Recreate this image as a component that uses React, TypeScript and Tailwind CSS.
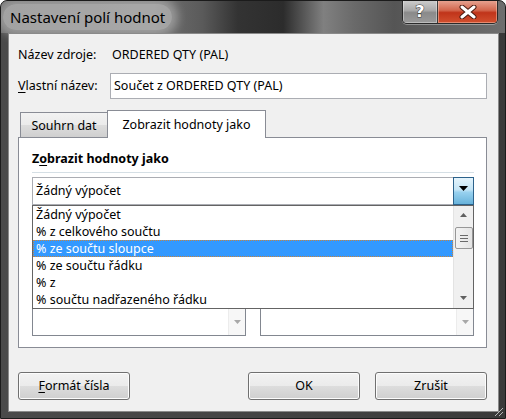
import React from "react";

const items = [
  "Žádný výpočet",
  "% z celkového součtu",
  "% ze součtu sloupce",
  "% ze součtu řádku",
  "% z",
  "% součtu nadřazeného řádku",
];

function Tri({ up = false, color = "#000", w = 7, h = 4 }: { up?: boolean; color?: string; w?: number; h?: number }) {
  return (
    <svg width={w} height={h} viewBox={`0 0 ${w} ${h}`} className="block">
      <polygon points={up ? `0,${h} ${w},${h} ${w / 2},0` : `0,0 ${w},0 ${w / 2},${h}`} fill={color} />
    </svg>
  );
}

const btn =
  "h-[28px] w-[112px] rounded-[3px] border border-[#707070] bg-[linear-gradient(#f2f2f2_0%,#ebebeb_50%,#dddddd_50%,#cfcfcf_100%)] shadow-[inset_0_0_0_1px_#fcfcfc] flex items-center justify-center text-black";

export default function App() {
  return (
    <div className="w-[506px] h-[419px] bg-white font-['Noto_Sans',sans-serif] text-[12.5px] leading-[16px] text-black">
      <div className="relative w-[506px] h-[419px] rounded-t-[7px] border border-[#1b1b1b] bg-[linear-gradient(90deg,#4a4a4a_0%,#444_50%,#3a3a3a_100%)] flex flex-col overflow-hidden">
        {/* Title bar */}
        <div className="h-[32px] flex items-start bg-[linear-gradient(90deg,#6a6a6a_0%,#727272_30%,#5a5a5a_40%,#333_47%,#2c2c2c_56%,#808080_64%,#6a6a6a_70%,#555_78%,#6e6e6e_100%)]">
          <div className="ml-[2px] mt-[3px] px-[7px] h-[26px] flex items-center rounded-[13px] bg-[rgba(255,255,255,0.38)] shadow-[0_0_10px_6px_rgba(255,255,255,0.32)]">
            <span className="text-[15px] leading-[20px] text-black">Nastavení polí hodnot</span>
          </div>
          <div className="ml-auto mr-[7px] -mt-px flex h-[24px] rounded-b-[5px] border border-t-0 border-[#2a2a2a] overflow-hidden shadow-[0_1px_0_rgba(255,255,255,0.35)]">
            <div className="w-[35px] h-full flex items-center justify-center bg-[linear-gradient(#cfcfcf_0%,#a9a9a9_45%,#8a8a8a_55%,#9a9a9a_100%)] border-r border-[#3a3a3a] shadow-[inset_0_0_0_1px_rgba(255,255,255,0.35)]">
              <span className="font-['DejaVu_Sans',sans-serif] font-bold text-[16px] leading-[16px] text-white [-webkit-text-stroke:1px_#3a3a3a] [paint-order:stroke_fill]">?</span>
            </div>
            <div className="w-[59px] h-full flex items-center justify-center bg-[linear-gradient(#e8a796_0%,#d2664d_45%,#c0341a_55%,#d2502f_100%)] shadow-[inset_0_0_0_1px_rgba(255,210,190,0.45)]">
              <svg width="18" height="14" viewBox="0 0 18 14">
                <path d="M3 2 L15 12 M15 2 L3 12" stroke="#4a1a10" strokeWidth="5" strokeLinecap="round" />
                <path d="M3 2 L15 12 M15 2 L3 12" stroke="#fff" strokeWidth="3" strokeLinecap="round" />
              </svg>
            </div>
          </div>
        </div>

        {/* Client area */}
        <div className="ml-[7px] w-[491px] h-[379px] border border-[#8a8a8a] bg-[#f0f0f0] flex flex-col pl-[9px] pt-[13px]">
          <div className="flex h-[16px] items-center">
            <div className="w-[94px]">Název zdroje:</div>
            <div>ORDERED QTY (PAL)</div>
          </div>
          <div className="mt-[10px] flex items-center h-[26px]">
            <div className="w-[92px]">
              <span className="underline underline-offset-2">V</span>lastní název:
            </div>
            <div className="w-[377px] h-[26px] border border-[#abadb3] bg-white flex items-center pl-[3px]">
              Součet z ORDERED QTY (PAL)
            </div>
          </div>

          {/* Tabs */}
          <div className="mt-[11px] flex items-end h-[27px] pl-[2px] relative z-10">
            <div className="w-[88px] h-[25px] border border-b-0 border-[#898c95] bg-[linear-gradient(#f2f2f2_0%,#ebebeb_50%,#dddddd_50%,#cfcfcf_100%)] flex items-center justify-center pt-[2px]">
              Souhrn dat
            </div>
            <div className="-ml-px w-[159px] h-[28px] -mb-px border border-b-0 border-[#898c95] bg-white flex items-center justify-center">
              Zobrazit hodnoty jako
            </div>
          </div>

          {/* Panel */}
          <div className="w-[469px] h-[211px] border border-[#898c95] bg-white flex flex-col pl-[13px] pt-[13px]">
            <div className="h-[16px] font-bold">
              Z<span className="underline underline-offset-2">o</span>brazit hodnoty jako
            </div>
            <div className="mt-[5px] w-[442px] h-px bg-[#d5dfe5]" />
            <div className="relative mt-[4px] w-[442px]">
              <div className="h-[28px] flex border border-[#abadb3] bg-white">
                <div className="flex-1 flex items-center pl-[3px]">Žádný výpočet</div>
                <div className="-my-px -mr-px w-[21px] border border-[#2c628b] bg-[linear-gradient(#e5f4fc_0%,#c4e5f6_45%,#98d1ef_55%,#68b3db_100%)] flex items-center justify-center pb-[6px]">
                  <Tri w={9} h={5} />
                </div>
              </div>

              {/* Dropdown list overlay */}
              <div className="absolute left-0 top-full z-20 w-[442px] h-[104px] border border-[#646464] bg-white flex">
                <div className="flex-1 flex flex-col">
                  {items.map((t, i) =>
                    i === 2 ? (
                      <div key={t} className="h-[17px] flex items-center pl-[2px] bg-[#3399ff] text-white border border-dotted border-[#c8843e]">
                        {t}
                      </div>
                    ) : (
                      <div key={t} className="h-[17px] flex items-center pl-[3px]">
                        {t}
                      </div>
                    )
                  )}
                </div>
                <div className="w-[20px] h-full bg-[#f0f0f0] border-l border-[#e3e3e3] flex flex-col items-center">
                  <div className="h-[17px] flex items-center justify-center">
                    <Tri up w={7} h={4} color="#606060" />
                  </div>
                  <div className="mt-[4px] w-[18px] h-[22px] rounded-[2px] border border-[#979797] bg-[linear-gradient(90deg,#f3f3f3,#e4e4e4)] flex flex-col items-center justify-center gap-[2px]">
                    <div className="w-[8px] h-px bg-[#6a6a6a]" />
                    <div className="w-[8px] h-px bg-[#6a6a6a]" />
                    <div className="w-[8px] h-px bg-[#6a6a6a]" />
                  </div>
                  <div className="mt-auto h-[17px] flex items-center justify-center pb-[4px]">
                    <Tri w={7} h={4} color="#606060" />
                  </div>
                </div>
              </div>
            </div>

            {/* Fields hidden behind the open list */}
            <div className="mt-[27px] flex w-[442px] gap-[14px]">
              {[0, 1].map((k) => (
                <div key={k} className="w-[214px] h-[104px] border border-[#828790] bg-white flex justify-end">
                  <div className="w-[17px] h-full bg-[#f7f7f7] border-l border-[#ececec] flex flex-col justify-end items-center pb-[11px]">
                    <Tri w={7} h={4} color="#a8a8a8" />
                  </div>
                </div>
              ))}
            </div>
          </div>

          {/* Buttons */}
          <div className="mt-[24px] w-[469px] flex">
            <div className={btn}>
              <span className="underline underline-offset-2">F</span>ormát čísla
            </div>
            <div className={`${btn} ml-auto border-[#3c9ad6] shadow-[inset_0_0_0_1px_#8fdcfb]`}>OK</div>
            <div className={`${btn} ml-[15px]`}>Zrušit</div>
          </div>
        </div>

        {/* resize grip */}
        <svg className="absolute right-[1px] bottom-[1px]" width="12" height="12" viewBox="0 0 12 12">
          <path d="M11 3 L3 11 M11 7 L7 11" stroke="#b8b8b8" strokeWidth="1" />
        </svg>
      </div>
    </div>
  );
}
